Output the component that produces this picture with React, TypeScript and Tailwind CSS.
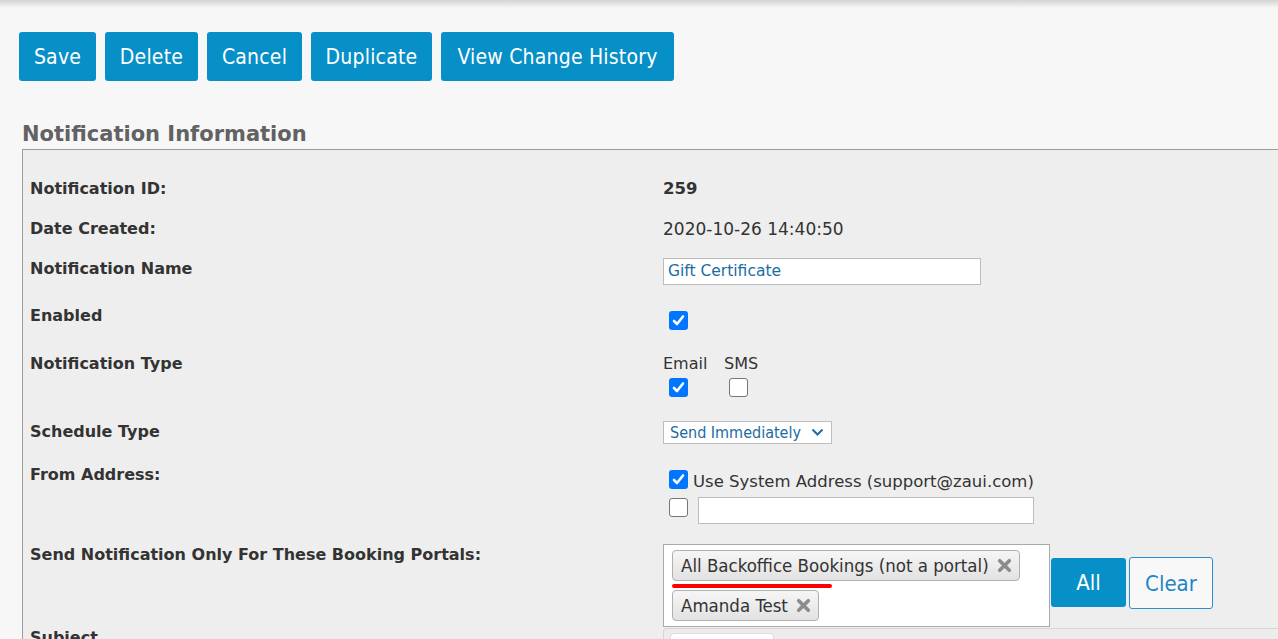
const condensed = "font-['DejaVu_Sans_Condensed','DejaVu_Sans',sans-serif]";
const wide = "font-['DejaVu_Sans',sans-serif]";

const Check = ({ on }: { on: boolean }) =>
  on ? (
    <span className="flex h-[19px] w-[19px] shrink-0 items-center justify-center rounded-[3px] bg-[#0075ff]">
      <svg width="13" height="13" viewBox="0 0 13 13">
        <path d="M2 7l3 3 6-7.5" fill="none" stroke="#fff" strokeWidth="2.6" strokeLinecap="round" strokeLinejoin="round" />
      </svg>
    </span>
  ) : (
    <span className="block h-[19px] w-[19px] shrink-0 rounded-[3px] border border-[#767676] bg-white" />
  );

const Remove = () => (
  <svg width="15" height="15" viewBox="0 0 14 14" className="ml-[8px]">
    <path d="M2.5 2.5l9 9M11.5 2.5l-9 9" stroke="#8c8c8c" strokeWidth="3.4" strokeLinecap="round" />
  </svg>
);

const Tag = ({ text }: { text: string }) => (
  <span className={`flex h-[31px] w-fit items-center rounded-[4px] border border-[#b0b0b0] bg-gradient-to-b from-[#f6f6f6] to-[#e2e2e2] pl-[8px] pr-[7px] text-[18.5px] text-[#333] ${condensed}`}>
    {text}
    <Remove />
  </span>
);

const Label = ({ children, pt }: { children: React.ReactNode; pt: string }) => (
  <div className={`w-[633px] shrink-0 text-[16px] font-bold leading-[20px] text-[#333] ${wide} ${pt}`}>{children}</div>
);

export default function App() {
  const buttons = [
    { t: 'Save', w: 'w-[77px]' },
    { t: 'Delete', w: 'w-[93px]' },
    { t: 'Cancel', w: 'w-[95px]' },
    { t: 'Duplicate', w: 'w-[121px]' },
    { t: 'View Change History', w: 'w-[233px]' },
  ];

  return (
    <div className="h-[639px] overflow-hidden bg-[#f7f7f7]">
      <div className="h-[8px] bg-gradient-to-b from-[#d4d4d4] to-[#f7f7f7]" />

      <div className="mt-[24px] flex gap-[9px] pl-[19px]">
        {buttons.map((b) => (
          <button
            key={b.t}
            className={`h-[49px] ${b.w} rounded-[3px] bg-[#078fc8] pt-[2px] text-[21px] tracking-[0.2px] text-white ${condensed}`}
          >
            {b.t}
          </button>
        ))}
      </div>

      <h2 className={`ml-[22px] mt-[41px] h-[24px] text-[21px] font-bold leading-[24px] text-[#626262] ${wide}`}>
        Notification Information
      </h2>

      <div className="ml-[22px] mt-[3px] border-l border-t border-[#9c9c9c] bg-[#eeeeee] pl-[7px] pt-[19px]">
        <div className="flex h-[40px] items-start">
          <Label pt="pt-[10px]">Notification ID:</Label>
          <div className={`pt-[10px] text-[16.5px] font-bold leading-[20px] text-[#333] ${wide}`}>259</div>
        </div>

        <div className="flex h-[40px] items-start">
          <Label pt="pt-[10px]">Date Created:</Label>
          <div className={`pt-[10px] text-[17px] leading-[20px] text-[#333] ${wide}`}>2020-10-26 14:40:50</div>
        </div>

        <div className="flex h-[40px] items-start">
          <Label pt="pt-[10px]">Notification Name</Label>
          <div className={`mt-[9px] flex h-[27px] w-[318px] items-center border border-[#bdbdbd] bg-white px-[4px] text-[15.5px] text-[#1b6ca3] ${wide}`}>
            Gift Certificate
          </div>
        </div>

        <div className="flex h-[50px] items-start">
          <Label pt="pt-[17px]">Enabled</Label>
          <div className="ml-[6px] mt-[22px]">
            <Check on />
          </div>
        </div>

        <div className="flex h-[72px] items-start">
          <Label pt="pt-[15px]">Notification Type</Label>
          <div className={`flex pt-[15px] text-[16px] leading-[20px] text-[#333] ${wide}`}>
            <div className="w-[61px]">
              <div>Email</div>
              <div className="ml-[6px] mt-[4px]">
                <Check on />
              </div>
            </div>
            <div>
              <div>SMS</div>
              <div className="ml-[5px] mt-[4px]">
                <Check on={false} />
              </div>
            </div>
          </div>
        </div>

        <div className="flex h-[45px] items-start">
          <Label pt="pt-[11px]">Schedule Type</Label>
          <div className={`mt-[10px] flex h-[23px] w-[169px] items-center justify-between border border-[#bdbdbd] bg-white pl-[6px] pr-[7px] text-[16px] text-[#1b6ca3] ${condensed}`}>
            Send Immediately
            <svg width="13" height="9" viewBox="0 0 13 9">
              <path d="M1.5 1.5l5 5 5-5" fill="none" stroke="#1b6ca3" strokeWidth="2" />
            </svg>
          </div>
        </div>

        <div className="flex h-[80px] items-start">
          <Label pt="pt-[9px]">From Address:</Label>
          <div className="ml-[6px] pt-[14px]">
            <div className="flex h-[22px] items-start">
              <Check on />
              <span className={`ml-[5px] mt-[2px] text-[16.5px] leading-[20px] text-[#333] ${wide}`}>
                Use System Address (support@zaui.com)
              </span>
            </div>
            <div className="mt-[5px] flex items-start">
              <div className="mt-[1px]">
                <Check on={false} />
              </div>
              <div className="ml-[10px] h-[27px] w-[336px] border border-[#bdbdbd] bg-white" />
            </div>
          </div>
        </div>

        <div className="flex h-[92px] items-start">
          <Label pt="pt-[9px]">Send Notification Only For These Booking Portals:</Label>
          <div className="flex items-start">
            <div className="relative mt-[8px] h-[83px] w-[387px] border border-[#aaaaaa] bg-white pl-[8px] pt-[5px]">
              <Tag text="All Backoffice Bookings (not a portal)" />
              <div className="mt-[9px]">
                <Tag text="Amanda Test" />
              </div>
              <span className="absolute left-[8px] top-[39px] h-[4px] w-[160px] rounded-full bg-[#ff0000]" />
            </div>
            <button className={`ml-[1px] mt-[22px] h-[49px] w-[75px] rounded-[3px] bg-[#078fc8] text-[22px] text-white ${condensed}`}>
              All
            </button>
            <button className={`ml-[3px] mt-[21px] h-[52px] w-[84px] rounded-[3px] border border-[#2a8fcf] bg-[#f8f8f8] text-[22px] text-[#1f86c4] ${condensed}`}>
              Clear
            </button>
          </div>
        </div>

        <div className="flex h-[40px] items-start">
          <Label pt="pt-[0px]">Subject</Label>
          <div className="flex-1 rounded-tl-[4px] border-l border-t border-[#d6d6d6] bg-[#ececec] pl-[6px] pt-[4px]">
            <div className="h-[30px] w-[104px] rounded-[4px] border border-[#dddddd] bg-white" />
          </div>
        </div>
      </div>
    </div>
  );
}
